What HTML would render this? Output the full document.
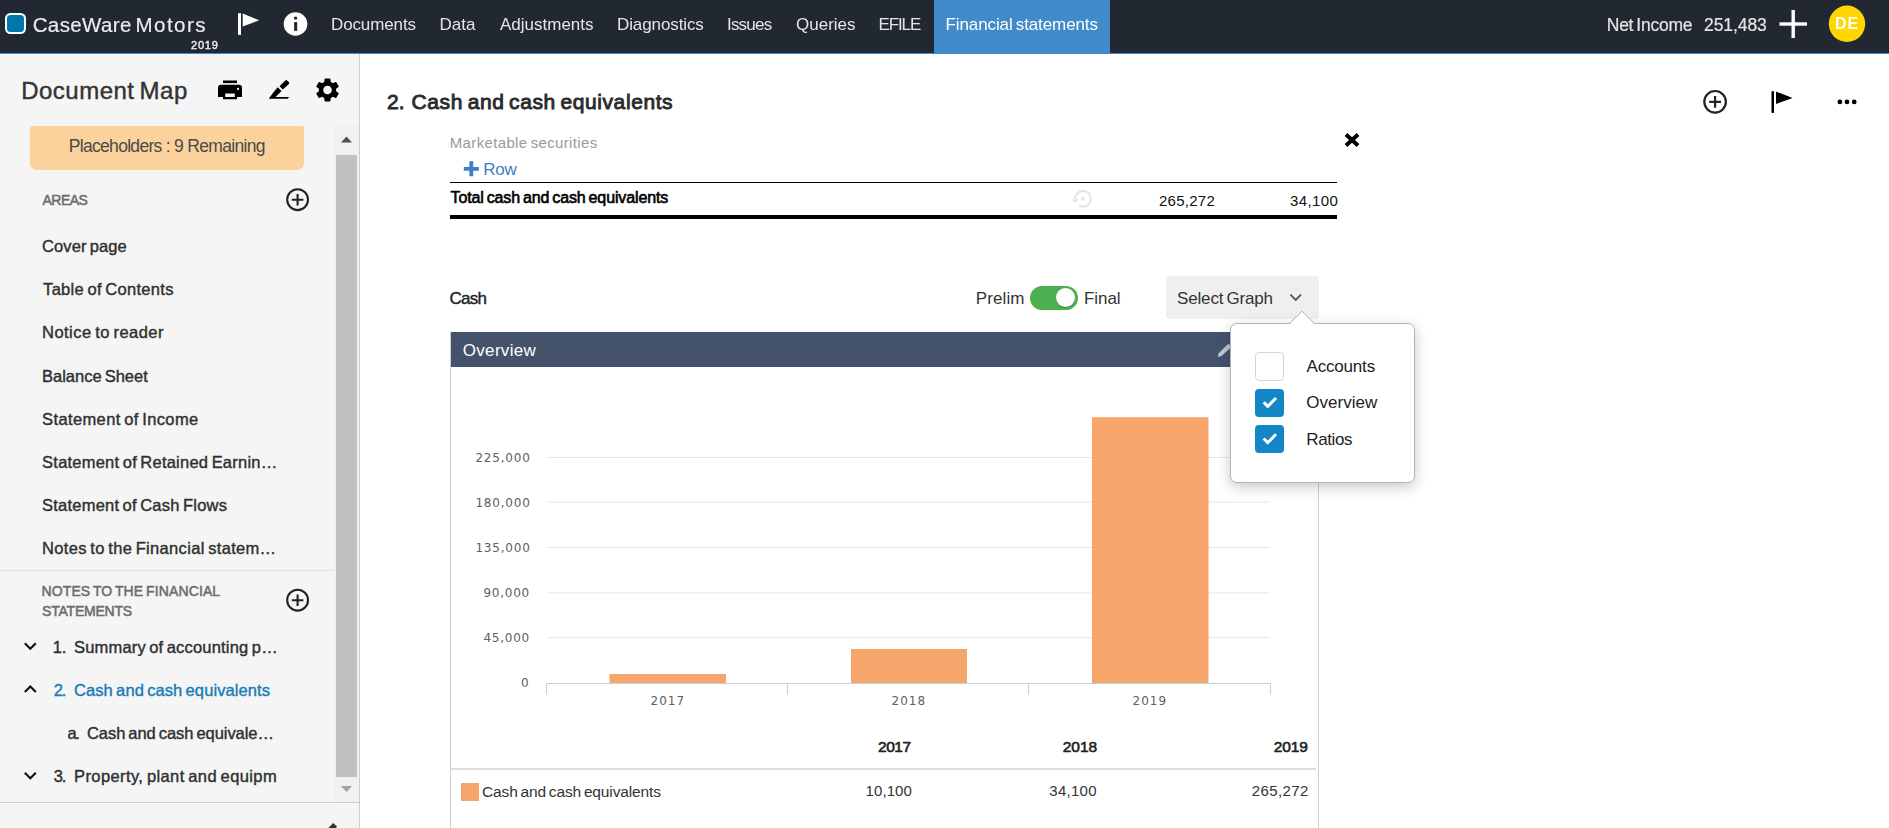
<!DOCTYPE html>
<html lang="en">
<head>
<meta charset="utf-8">
<title>CaseWare Motors - Financial statements</title>
<style>
html,body{margin:0;padding:0;}
body{width:1889px;height:828px;overflow:hidden;background:#fff;position:relative;font-family:"Liberation Sans",sans-serif;}
.a{position:absolute;}
.t{position:absolute;white-space:pre;}
.txt{position:absolute;left:0;top:0;width:1889px;height:54px;will-change:transform;}
svg{position:absolute;overflow:visible;}
</style>
</head>
<body>
<!-- top bar -->
<div class="a" style="left:0;top:0;width:1889px;height:53px;background:#222831;"></div>
<div class="a" style="left:0;top:53px;width:1889px;height:1px;background:#428bca;"></div>
<div class="a" style="left:934px;top:0;width:176px;height:54px;background:#428bca;"></div>
<div class="a" style="left:4.5px;top:13.3px;width:17px;height:17px;border:2px solid #fff;border-radius:5.5px;background:#0077aa;"></div>
<!-- flag icon (nav) -->
<svg style="left:0;top:0" width="1889" height="53">
  <rect x="238" y="13.2" width="3" height="21.7" fill="#fff"/>
  <path d="M242.7 13.4 L259.2 20.3 L242.7 26.5 Z" fill="#fff"/>
  <circle cx="295.5" cy="24" r="11.8" fill="#fff"/>
  <circle cx="295.6" cy="18.1" r="1.7" fill="#222831"/>
  <rect x="294.1" y="22.1" width="3.1" height="8.8" fill="#222831"/>
  <rect x="1779.5" y="22.3" width="27.5" height="3.4" fill="#fff"/>
  <rect x="1791.5" y="10" width="3.4" height="28" fill="#fff"/>
  <circle cx="1847" cy="23.8" r="18.2" fill="#ffd600"/>
</svg>

<!-- sidebar -->
<div class="a" style="left:0;top:54px;width:359px;height:774px;background:#f5f5f5;"></div>
<div class="a" style="left:359px;top:54px;width:1px;height:774px;background:#cdcdcd;"></div>
<div class="a" style="left:30px;top:126px;width:274px;height:44px;background:#fcd29c;border-radius:2px 2px 7px 7px;"></div>
<!-- scrollbar -->
<div class="a" style="left:334px;top:126px;width:25px;height:676px;background:#f1f1f1;"></div>
<div class="a" style="left:336px;top:155px;width:21px;height:622px;background:#c1c1c1;"></div>
<svg style="left:0;top:0" width="360" height="828">
  <path d="M341 142.5 L352 142.5 L346.5 136.5 Z" fill="#505050"/>
  <path d="M341 786 L352 786 L346.5 792 Z" fill="#a3a3a3"/>
</svg>
<div class="a" style="left:0;top:570px;width:334px;height:1px;background:#e2e2e2;"></div>
<div class="a" style="left:0;top:802px;width:359px;height:1px;background:#cfcfcf;"></div>
<!-- sidebar icons -->
<svg style="left:0;top:0" width="360" height="828">
  <!-- printer -->
  <rect x="223" y="80.5" width="14" height="2.6" fill="#000"/>
  <path d="M221 84.8 H239 a3 3 0 0 1 3 3 V97 H237 V92 H223 V97 H218 V87.8 a3 3 0 0 1 3 -3 Z" fill="#000"/>
  <path d="M223 92 H237 V99.2 H223 Z M225.2 93.4 V97 H234.8 V93.4 Z" fill="#000" fill-rule="evenodd"/>
  <circle cx="238" cy="88.9" r="1.1" fill="#f5f5f5"/>
  <!-- pen -->
  <path d="M279.5 86.2 L285.3 80.4 Q286.2 79.5 287.1 80.4 L288.9 82.1 Q289.8 83 288.9 83.9 L282.8 89.5 Z" fill="#000"/>
  <path d="M277.7 87.3 L281.6 90.9 L278 94.5 L275.6 97 L289.3 97 L287.5 98.8 L268.7 98.8 L274.1 91.6 Z" fill="#000"/>
  <!-- gear -->
  <g transform="translate(313.1,75.6) scale(1.2)"><path fill="#000" d="M19.14 12.94c.04-.3.06-.61.06-.94 0-.32-.02-.64-.07-.94l2.03-1.58c.18-.14.23-.41.12-.61l-1.92-3.32c-.12-.22-.37-.29-.59-.22l-2.39.96c-.5-.38-1.03-.7-1.62-.94l-.36-2.54c-.04-.24-.24-.41-.48-.41h-3.84c-.24 0-.43.17-.47.41l-.36 2.54c-.59.24-1.13.57-1.62.94l-2.39-.96c-.22-.08-.47 0-.59.22L2.74 8.87c-.12.21-.08.47.12.61l2.03 1.58c-.05.3-.09.63-.09.94s.02.64.07.94l-2.03 1.58c-.18.14-.23.41-.12.61l1.92 3.32c.12.22.37.29.59.22l2.39-.96c.5.38 1.03.7 1.62.94l.36 2.54c.05.24.24.41.48.41h3.84c.24 0 .44-.17.47-.41l.36-2.54c.59-.24 1.13-.56 1.62-.94l2.39.96c.22.08.47 0 .59-.22l1.92-3.32c.12-.22.07-.47-.12-.61l-2.01-1.58zM12 15.6c-1.98 0-3.6-1.62-3.6-3.6s1.62-3.6 3.6-3.6 3.6 1.62 3.6 3.6-1.62 3.6-3.6 3.6z"/></g>
  <!-- circle plus x2 -->
  <g fill="none" stroke="#222" stroke-width="2.1">
    <circle cx="297.6" cy="199.7" r="10.4"/><path d="M291.8 199.7 H303.4 M297.6 193.9 V205.5"/>
    <circle cx="297.6" cy="600.2" r="10.4"/><path d="M291.8 600.2 H303.4 M297.6 594.4 V606"/>
  </g>
  <!-- chevrons -->
  <g fill="none" stroke="#111" stroke-width="2.1">
    <path d="M24.8 643.2 L30.3 648.7 L35.8 643.2"/>
    <path d="M24.8 692 L30.3 686.5 L35.8 692"/>
    <path d="M24.8 772.8 L30.3 778.3 L35.8 772.8"/>
  </g>
  <!-- pencil tip at bottom -->
  <path d="M328.3 828 L333.2 823 L337 826.6 L336 828 Z" fill="#333"/>
</svg>

<!-- main heading icons -->
<svg style="left:0;top:0" width="1889" height="828">
  <g fill="none" stroke="#222" stroke-width="2.2">
    <circle cx="1715.1" cy="101.8" r="10.8"/><path d="M1709.2 101.8 H1721 M1715.1 95.9 V107.7"/>
  </g>
  <rect x="1771.5" y="91.2" width="2.5" height="21.7" fill="#000"/>
  <path d="M1776 91.6 L1792.6 98 L1776 104 Z" fill="#000"/>
  <circle cx="1839.9" cy="101.9" r="2.4" fill="#000"/><circle cx="1847" cy="101.9" r="2.4" fill="#000"/><circle cx="1854.2" cy="101.9" r="2.4" fill="#000"/>
  <!-- X -->
  <path d="M1346 134.5 L1358 145.5 M1358 134.5 L1346 145.5" stroke="#000" stroke-width="4" fill="none"/>
  <!-- plus Row -->
  <path d="M463.8 168.8 H478.8 M471.3 161.3 V176.3" stroke="#3d7fbf" stroke-width="3.8" fill="none"/>
  <!-- reset icon -->
  <path d="M1075.1 198.9 A7.9 7.9 0 1 1 1079.05 205.74" fill="none" stroke="#e4e4e4" stroke-width="2"/>
  <path d="M1071.2 199.2 L1079 199.2 L1075.2 203 Z" fill="#e4e4e4"/>
  <circle cx="1083" cy="198.9" r="1.9" fill="#e4e4e4"/>
</svg>
<!-- table lines -->
<div class="a" style="left:450px;top:182px;width:887px;height:1px;background:#000;"></div>
<div class="a" style="left:450px;top:215px;width:887px;height:4px;background:#000;"></div>

<!-- toggle -->
<div class="a" style="left:1030px;top:286px;width:48px;height:24px;border-radius:12px;background:#4caf50;"></div>
<div class="a" style="left:1056px;top:287.8px;width:19.2px;height:19.2px;border-radius:10px;background:#fff;box-shadow:0 1px 1px rgba(0,0,0,0.18);"></div>
<!-- select graph button -->
<div class="a" style="left:1166px;top:276px;width:153px;height:43px;border-radius:4px;background:#efefef;"></div>
<svg style="left:0;top:0" width="1889" height="828"><path d="M1290.4 294.6 L1295.7 299.9 L1301 294.6" fill="none" stroke="#555" stroke-width="1.8"/></svg>

<!-- panel -->
<div class="a" style="left:450px;top:331px;width:1px;height:497px;background:#cfcfcf;"></div>
<div class="a" style="left:1318px;top:331px;width:1px;height:497px;background:#cfcfcf;"></div>
<div class="a" style="left:451px;top:332px;width:867px;height:35px;background:#45526c;"></div>
<svg style="left:0;top:0" width="1889" height="828">
  <path d="M1217.8 357 L1218.7 353.3 L1228.3 343.7 L1231.6 347 L1221.4 355.9 Z" fill="#c3c8d2"/>
</svg>
<!-- chart -->
<svg style="left:0;top:0" width="1889" height="828">
  <g stroke="#e6e6e6" stroke-width="1">
    <path d="M547 457.5 H1270 M547 502 H1270 M547 547.5 H1270 M547 592.9 H1270 M547 637.6 H1270"/>
  </g>
  <rect x="609.5" y="674" width="116.5" height="9" fill="#f7a66b"/>
  <rect x="851" y="649" width="116" height="34" fill="#f7a66b"/>
  <rect x="1092" y="417.2" width="116.5" height="265.8" fill="#f7a66b"/>
  <g stroke="#c0d0e0" stroke-width="1" fill="none">
    <path d="M546.5 683.5 H1270.5 M546.5 683.5 V694.5 M787.5 683.5 V694.5 M1028.5 683.5 V694.5 M1270.5 683.5 V694.5"/>
  </g>
</svg>
<!-- data table -->
<div class="a" style="left:451px;top:768px;width:865px;height:2px;background:#dddddd;"></div>
<div class="a" style="left:461.3px;top:783.3px;width:17.5px;height:17.5px;background:#f7a66b;"></div>

<!-- popup -->
<div class="a" style="left:1230px;top:323px;width:182.5px;height:158px;background:#fff;border:1px solid #b3b3b3;border-radius:7px;box-shadow:0 4px 14px rgba(0,0,0,0.22);"></div>
<svg style="left:0;top:0" width="1889" height="828">
  <path d="M1289.5 324.2 L1302 311.6 L1314.5 324.2 Z" fill="#fff"/>
  <path d="M1289.5 323.6 L1302 311.2 L1314.5 323.6" fill="none" stroke="#b3b3b3" stroke-width="1"/>
</svg>
<div class="a" style="left:1255.3px;top:352.2px;width:26.5px;height:26.5px;border:1px solid #cfd6dd;border-radius:4px;background:#fff;"></div>
<div class="a" style="left:1255.3px;top:389px;width:28.5px;height:28px;border-radius:4px;background:#1386c8;"></div>
<div class="a" style="left:1255.3px;top:425.3px;width:28.5px;height:28.2px;border-radius:4px;background:#1386c8;"></div>
<svg style="left:0;top:0" width="1889" height="828">
  <path d="M1263.7 402.2 L1267.7 406.4 L1276 398" fill="none" stroke="#fff" stroke-width="3"/>
  <path d="M1263.7 438.5 L1267.7 442.7 L1276 434.3" fill="none" stroke="#fff" stroke-width="3"/>
</svg>

<!-- header text -->
<div class="txt">
<span class="t" style="left:32.70px;top:15px;font:400 20.5px/20.5px 'Liberation Sans', sans-serif;color:#ebebeb;letter-spacing:0.372px;-webkit-text-stroke:0.2px;">CaseWare</span>
<span class="t" style="left:135.60px;top:15px;font:400 20.5px/20.5px 'Liberation Sans', sans-serif;color:#ebebeb;letter-spacing:1.440px;-webkit-text-stroke:0.2px;">Motors</span>
<span class="t" style="left:191.10px;top:40px;font:400 11px/11px 'Liberation Sans', sans-serif;color:#f0f0f0;letter-spacing:0.766px;-webkit-text-stroke:0.4px;">2019</span>
<span class="t" style="left:331.00px;top:16px;font:400 17px/17px 'Liberation Sans', sans-serif;color:#e4e4e4;letter-spacing:-0.125px;">Documents</span>
<span class="t" style="left:439.50px;top:16px;font:400 17px/17px 'Liberation Sans', sans-serif;color:#e4e4e4;">Data</span>
<span class="t" style="left:500.00px;top:16px;font:400 17px/17px 'Liberation Sans', sans-serif;color:#e4e4e4;">Adjustments</span>
<span class="t" style="left:617.00px;top:16px;font:400 17px/17px 'Liberation Sans', sans-serif;color:#e4e4e4;letter-spacing:-0.100px;">Diagnostics</span>
<span class="t" style="left:727.00px;top:16px;font:400 17px/17px 'Liberation Sans', sans-serif;color:#e4e4e4;letter-spacing:-0.800px;">Issues</span>
<span class="t" style="left:796.00px;top:16px;font:400 17px/17px 'Liberation Sans', sans-serif;color:#e4e4e4;">Queries</span>
<span class="t" style="left:878.50px;top:16px;font:400 17px/17px 'Liberation Sans', sans-serif;color:#e4e4e4;letter-spacing:-1.125px;">EFILE</span>
<span class="t" style="left:945.50px;top:16px;font:400 17px/17px 'Liberation Sans', sans-serif;color:#fff;letter-spacing:-0.105px;word-spacing:-0.085em;">Financial statements</span>
<span class="t" style="left:1606.75px;top:17px;font:400 17.5px/17.5px 'Liberation Sans', sans-serif;color:#e4e4e4;letter-spacing:-0.250px;-webkit-text-stroke:0.2px;word-spacing:-0.085em;">Net Income</span>
<span class="t" style="left:1704.00px;top:17px;font:400 17.5px/17.5px 'Liberation Sans', sans-serif;color:#e4e4e4;letter-spacing:-0.083px;-webkit-text-stroke:0.2px;">251,483</span>
<span class="t" style="left:1835.00px;top:16px;font:700 16px/16px 'Liberation Sans', sans-serif;color:#fff;letter-spacing:1.000px;">DE</span>
</div>
<!-- body text -->
<span class="t" style="left:21.20px;top:79px;font:400 24px/24px 'Liberation Sans', sans-serif;color:#333;letter-spacing:0.491px;-webkit-text-stroke:0.4px;word-spacing:-0.085em;">Document Map</span>
<span class="t" style="left:68.80px;top:138px;font:400 17.5px/17.5px 'Liberation Sans', sans-serif;color:#4a4a4a;letter-spacing:-0.696px;">Placeholders : 9 Remaining</span>
<span class="t" style="left:42.50px;top:193px;font:400 14px/14px 'Liberation Sans', sans-serif;color:#6c6c6c;letter-spacing:-0.500px;-webkit-text-stroke:0.5px;">AREAS</span>
<span class="t" style="left:42.10px;top:238px;font:400 16.5px/16.5px 'Liberation Sans', sans-serif;color:#2f2f2f;letter-spacing:0.078px;-webkit-text-stroke:0.4px;word-spacing:-0.085em;">Cover page</span>
<span class="t" style="left:43.10px;top:281px;font:400 16.5px/16.5px 'Liberation Sans', sans-serif;color:#2f2f2f;letter-spacing:0.294px;-webkit-text-stroke:0.4px;word-spacing:-0.085em;">Table of Contents</span>
<span class="t" style="left:42.10px;top:324px;font:400 16.5px/16.5px 'Liberation Sans', sans-serif;color:#2f2f2f;letter-spacing:0.446px;-webkit-text-stroke:0.4px;word-spacing:-0.085em;">Notice to reader</span>
<span class="t" style="left:42.10px;top:368px;font:400 16.5px/16.5px 'Liberation Sans', sans-serif;color:#2f2f2f;letter-spacing:-0.024px;-webkit-text-stroke:0.4px;word-spacing:-0.085em;">Balance Sheet</span>
<span class="t" style="left:42.10px;top:411px;font:400 16.5px/16.5px 'Liberation Sans', sans-serif;color:#2f2f2f;letter-spacing:0.371px;-webkit-text-stroke:0.4px;word-spacing:-0.085em;">Statement of Income</span>
<span class="t" style="left:42.10px;top:454px;font:400 16.5px/16.5px 'Liberation Sans', sans-serif;color:#2f2f2f;letter-spacing:0.226px;-webkit-text-stroke:0.4px;word-spacing:-0.085em;">Statement of Retained Earnin…</span>
<span class="t" style="left:42.10px;top:497px;font:400 16.5px/16.5px 'Liberation Sans', sans-serif;color:#2f2f2f;letter-spacing:0.213px;-webkit-text-stroke:0.4px;word-spacing:-0.085em;">Statement of Cash Flows</span>
<span class="t" style="left:42.10px;top:540px;font:400 16.5px/16.5px 'Liberation Sans', sans-serif;color:#2f2f2f;letter-spacing:0.326px;-webkit-text-stroke:0.4px;word-spacing:-0.085em;">Notes to the Financial statem…</span>
<span class="t" style="left:41.50px;top:584px;font:400 14px/14px 'Liberation Sans', sans-serif;color:#6c6c6c;letter-spacing:0.119px;-webkit-text-stroke:0.5px;word-spacing:-0.085em;">NOTES TO THE FINANCIAL</span>
<span class="t" style="left:42.10px;top:604px;font:400 14px/14px 'Liberation Sans', sans-serif;color:#6c6c6c;letter-spacing:-0.228px;-webkit-text-stroke:0.5px;">STATEMENTS</span>
<span class="t" style="left:52.75px;top:639px;font:400 16.5px/16.5px 'Liberation Sans', sans-serif;color:#2f2f2f;letter-spacing:-0.250px;-webkit-text-stroke:0.4px;">1.</span>
<span class="t" style="left:74.00px;top:639px;font:400 16.5px/16.5px 'Liberation Sans', sans-serif;color:#2f2f2f;letter-spacing:0.185px;-webkit-text-stroke:0.4px;word-spacing:-0.085em;">Summary of accounting p…</span>
<span class="t" style="left:53.75px;top:682px;font:400 16.5px/16.5px 'Liberation Sans', sans-serif;color:#187cb6;letter-spacing:-1.250px;-webkit-text-stroke:0.4px;">2.</span>
<span class="t" style="left:74.00px;top:682px;font:400 16.5px/16.5px 'Liberation Sans', sans-serif;color:#187cb6;letter-spacing:0.083px;-webkit-text-stroke:0.4px;word-spacing:-0.085em;">Cash and cash equivalents</span>
<span class="t" style="left:67.50px;top:725px;font:400 16.5px/16.5px 'Liberation Sans', sans-serif;color:#2f2f2f;letter-spacing:-1.500px;-webkit-text-stroke:0.4px;">a.</span>
<span class="t" style="left:87.00px;top:725px;font:400 16.5px/16.5px 'Liberation Sans', sans-serif;color:#2f2f2f;letter-spacing:-0.068px;-webkit-text-stroke:0.4px;word-spacing:-0.085em;">Cash and cash equivale…</span>
<span class="t" style="left:53.75px;top:768px;font:400 16.5px/16.5px 'Liberation Sans', sans-serif;color:#2f2f2f;letter-spacing:-1.250px;-webkit-text-stroke:0.4px;">3.</span>
<span class="t" style="left:74.00px;top:768px;font:400 16.5px/16.5px 'Liberation Sans', sans-serif;color:#2f2f2f;letter-spacing:0.400px;-webkit-text-stroke:0.4px;word-spacing:-0.085em;">Property, plant and equipm</span>
<span class="t" style="left:387.00px;top:91px;font:400 21px/21px 'Liberation Sans', sans-serif;color:#2b2b2b;-webkit-text-stroke:0.9px;">2.</span>
<span class="t" style="left:411.60px;top:91px;font:400 21px/21px 'Liberation Sans', sans-serif;color:#2b2b2b;letter-spacing:0.592px;-webkit-text-stroke:0.9px;word-spacing:-0.085em;">Cash and cash equivalents</span>
<span class="t" style="left:449.75px;top:135px;font:400 15px/15px 'Liberation Sans', sans-serif;color:#9a9a9a;letter-spacing:0.350px;word-spacing:-0.085em;">Marketable securities</span>
<span class="t" style="left:483.25px;top:161px;font:400 17px/17px 'Liberation Sans', sans-serif;color:#3d7fbf;letter-spacing:-0.250px;">Row</span>
<span class="t" style="left:450.50px;top:190px;font:400 16px/16px 'Liberation Sans', sans-serif;color:#000;letter-spacing:-0.117px;-webkit-text-stroke:0.6px;word-spacing:-0.085em;">Total cash and cash equivalents</span>
<span class="t" style="left:1159.00px;top:193px;font:400 15px/15px 'Liberation Sans', sans-serif;color:#111;letter-spacing:0.266px;">265,272</span>
<span class="t" style="left:1290.00px;top:193px;font:400 15px/15px 'Liberation Sans', sans-serif;color:#111;letter-spacing:0.400px;">34,100</span>
<span class="t" style="left:449.50px;top:290px;font:400 17px/17px 'Liberation Sans', sans-serif;color:#222;letter-spacing:-0.750px;-webkit-text-stroke:0.4px;">Cash</span>
<span class="t" style="left:975.75px;top:290px;font:400 17px/17px 'Liberation Sans', sans-serif;color:#333;letter-spacing:0.100px;">Prelim</span>
<span class="t" style="left:1084.00px;top:290px;font:400 17px/17px 'Liberation Sans', sans-serif;color:#333;letter-spacing:-0.064px;">Final</span>
<span class="t" style="left:1177.00px;top:290px;font:400 17px/17px 'Liberation Sans', sans-serif;color:#333;letter-spacing:-0.160px;word-spacing:-0.085em;">Select Graph</span>
<span class="t" style="left:462.75px;top:342px;font:400 17px/17px 'Liberation Sans', sans-serif;color:#fff;letter-spacing:0.321px;">Overview</span>
<span class="t" style="left:1306.50px;top:358px;font:400 17px/17px 'Liberation Sans', sans-serif;color:#222;letter-spacing:-0.185px;">Accounts</span>
<span class="t" style="left:1306.30px;top:394px;font:400 17px/17px 'Liberation Sans', sans-serif;color:#222;letter-spacing:0.028px;">Overview</span>
<span class="t" style="left:1306.30px;top:431px;font:400 17px/17px 'Liberation Sans', sans-serif;color:#222;letter-spacing:-0.380px;">Ratios</span>
<span class="t" style="left:521.00px;top:677px;font:400 12px/12px 'DejaVu Sans', 'Liberation Sans', sans-serif;color:#606060;">0</span>
<span class="t" style="left:483.40px;top:632px;font:400 12px/12px 'DejaVu Sans', 'Liberation Sans', sans-serif;color:#606060;letter-spacing:0.760px;">45,000</span>
<span class="t" style="left:483.40px;top:587px;font:400 12px/12px 'DejaVu Sans', 'Liberation Sans', sans-serif;color:#606060;letter-spacing:0.760px;">90,000</span>
<span class="t" style="left:475.40px;top:542px;font:400 12px/12px 'DejaVu Sans', 'Liberation Sans', sans-serif;color:#606060;letter-spacing:0.800px;">135,000</span>
<span class="t" style="left:475.40px;top:497px;font:400 12px/12px 'DejaVu Sans', 'Liberation Sans', sans-serif;color:#606060;letter-spacing:0.800px;">180,000</span>
<span class="t" style="left:475.40px;top:452px;font:400 12px/12px 'DejaVu Sans', 'Liberation Sans', sans-serif;color:#606060;letter-spacing:0.800px;">225,000</span>
<span class="t" style="left:650.50px;top:695px;font:400 12px/12px 'DejaVu Sans', 'Liberation Sans', sans-serif;color:#606060;letter-spacing:1.000px;">2017</span>
<span class="t" style="left:891.50px;top:695px;font:400 12px/12px 'DejaVu Sans', 'Liberation Sans', sans-serif;color:#606060;letter-spacing:1.000px;">2018</span>
<span class="t" style="left:1132.50px;top:695px;font:400 12px/12px 'DejaVu Sans', 'Liberation Sans', sans-serif;color:#606060;letter-spacing:1.000px;">2019</span>
<span class="t" style="left:878.00px;top:739px;font:400 15.5px/15.5px 'Liberation Sans', sans-serif;color:#222;letter-spacing:-0.467px;-webkit-text-stroke:0.6px;">2017</span>
<span class="t" style="left:1062.80px;top:739px;font:400 15.5px/15.5px 'Liberation Sans', sans-serif;color:#222;letter-spacing:-0.066px;-webkit-text-stroke:0.6px;">2018</span>
<span class="t" style="left:1273.70px;top:739px;font:400 15.5px/15.5px 'Liberation Sans', sans-serif;color:#222;letter-spacing:-0.099px;-webkit-text-stroke:0.6px;">2019</span>
<span class="t" style="left:482.00px;top:784px;font:400 15.5px/15.5px 'Liberation Sans', sans-serif;color:#333;letter-spacing:-0.134px;word-spacing:-0.085em;">Cash and cash equivalents</span>
<span class="t" style="left:865.50px;top:783px;font:400 15px/15px 'Liberation Sans', sans-serif;color:#333;letter-spacing:0.100px;">10,100</span>
<span class="t" style="left:1049.30px;top:783px;font:400 15px/15px 'Liberation Sans', sans-serif;color:#333;letter-spacing:0.260px;">34,100</span>
<span class="t" style="left:1251.80px;top:783px;font:400 15px/15px 'Liberation Sans', sans-serif;color:#333;letter-spacing:0.400px;">265,272</span>
</body>
</html>
